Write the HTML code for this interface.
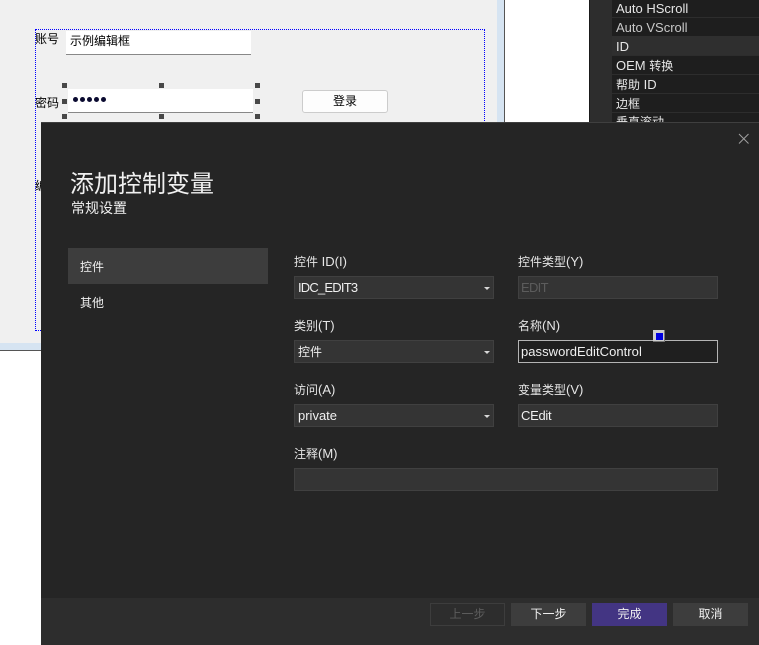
<!DOCTYPE html>
<html lang="zh">
<head>
<meta charset="utf-8">
<title>添加控制变量</title>
<style>
html,body{margin:0;padding:0;width:759px;height:645px;overflow:hidden;background:#fff}
body{position:relative;font-family:"Liberation Sans","Noto Sans CJK SC",sans-serif;font-size:13px}
.a{position:absolute;box-sizing:border-box}
.t{position:absolute;white-space:nowrap;line-height:18px;height:18px}
.row{position:absolute;left:612px;width:147px;background:#1e1e1e;color:#e6e6e6;line-height:19px;padding-left:4px;box-sizing:border-box;white-space:nowrap}
.h{position:absolute;width:5px;height:5px;background:#484848}
.f{position:absolute;height:23px;width:200px;background:#343434;border:1px solid #404040;box-sizing:border-box;color:#f0f0f0;line-height:21px;padding-left:3px;white-space:nowrap}
.f.w{padding-left:2px}
.arr{position:absolute;right:3px;top:10px;width:0;height:0;border-left:3px solid transparent;border-right:3px solid transparent;border-top:3px solid #d8d8d8}
.l{position:absolute;color:#e6e6e6;line-height:18px;white-space:nowrap}
.c{font-size:12px}
.b{position:absolute;top:603px;width:75px;height:23px;background:#3d3d3d;color:#f0f0f0;text-align:center;line-height:23px;box-sizing:border-box;font-size:12px}
</style>
</head>
<body>
<!-- background IDE -->
<div class="a" style="left:0;top:0;width:497px;height:343px;background:#f0f0f0"></div>
<div class="a" style="left:497px;top:0;width:7px;height:122px;background:#d6e4f2"></div>
<div class="a" style="left:0;top:343px;width:41px;height:7px;background:#d6e4f2"></div>
<div class="a" style="left:0;top:350px;width:41px;height:1px;background:#555"></div>
<div class="a" style="left:504px;top:0;width:1px;height:122px;background:#555"></div>
<div class="a" style="left:589px;top:0;width:1px;height:122px;background:#1a1a1a"></div>
<div class="a" style="left:590px;top:0;width:169px;height:122px;background:#2d2d2d"></div>

<div class="row" style="top:0;height:17px;line-height:17px">Auto HScroll</div>
<div class="row" style="top:18px;height:18px;color:#c8c8c8">Auto VScroll</div>
<div class="row" style="top:36px;height:19px;background:#2f2f2f;line-height:21px">ID</div>
<div class="row" style="top:56px;height:18px">OEM <span class="c">转换</span></div>
<div class="row" style="top:75px;height:18px"><span class="c">帮助</span> ID</div>
<div class="row" style="top:94px;height:18px"><span class="c">边框</span></div>
<div class="row" style="top:113px;height:9px;overflow:hidden;line-height:17px"><span class="c">垂直滚动</span></div>

<!-- dialog designer -->
<div class="a" style="left:35px;top:29px;width:450px;height:302px;border:1px dotted #0000ff"></div>
<div class="t" style="left:35px;top:30px;font-size:12px;color:#000">账号</div>
<div class="t" style="left:35px;top:94px;font-size:12px;color:#000">密码</div>
<div class="t" style="left:35px;top:177px;font-size:12px;color:#000">编</div>
<div class="a" style="left:66px;top:31px;width:185px;height:24px;background:#fff;border-bottom:1px solid #888;padding-left:4px;font-size:12px;line-height:21px;color:#000">示例编辑框</div>
<div class="a" style="left:68px;top:89px;width:185px;height:24px;background:#fff;border-bottom:1px solid #888"></div>
<div class="a" style="left:73px;top:97px;width:34px;height:9px;display:flex;gap:1.6px">
<i style="width:5.4px;height:5.4px;border-radius:50%;background:#0a0a30;display:block"></i><i style="width:5.4px;height:5.4px;border-radius:50%;background:#0a0a30;display:block"></i><i style="width:5.4px;height:5.4px;border-radius:50%;background:#0a0a30;display:block"></i><i style="width:5.4px;height:5.4px;border-radius:50%;background:#0a0a30;display:block"></i><i style="width:5.4px;height:5.4px;border-radius:50%;background:#0a0a30;display:block"></i>
</div>
<div class="a" style="left:302px;top:90px;width:86px;height:23px;background:#fdfdfd;border:1px solid #ccc;border-radius:3px;text-align:center;font-size:12px;line-height:21px;color:#000">登录</div>
<div class="h" style="left:62px;top:83px"></div><div class="h" style="left:159px;top:83px"></div><div class="h" style="left:255px;top:83px"></div>
<div class="h" style="left:62px;top:99px"></div><div class="h" style="left:255px;top:99px"></div>
<div class="h" style="left:62px;top:114px"></div><div class="h" style="left:159px;top:114px"></div><div class="h" style="left:255px;top:114px"></div>

<!-- modal -->
<div class="a" style="left:41px;top:122px;width:718px;height:523px;background:#252525;border-top:1px solid #3f3f3f"></div>
<div class="a" style="left:41px;top:598px;width:718px;height:47px;background:#2d2d2d"></div>
<svg class="a" style="left:738px;top:133px" width="12" height="12" viewBox="0 0 12 12"><path d="M1 1L10.500 10.500M10.500 1L1 10.500" stroke="#a0a0a0" stroke-width="1" fill="none"/></svg>

<div class="t" style="left:70px;top:169px;font-size:24px;line-height:32px;height:32px;color:#f0f0f0">添加控制变量</div>
<div class="t" style="left:71px;top:199px;font-size:14px;color:#f0f0f0">常规设置</div>

<div class="a" style="left:68px;top:248px;width:200px;height:36px;background:#3d3d3d"></div>
<div class="t" style="left:80px;top:258px;color:#f0f0f0;font-size:12px">控件</div>
<div class="t" style="left:80px;top:294px;color:#f0f0f0;font-size:12px">其他</div>

<div class="l" style="left:294px;top:253px"><span class="c">控件</span> ID(I)</div>
<div class="l" style="left:518px;top:253px"><span class="c">控件类型</span>(Y)</div>
<div class="l" style="left:294px;top:317px"><span class="c">类别</span>(T)</div>
<div class="l" style="left:518px;top:317px"><span class="c">名称</span>(N)</div>
<div class="l" style="left:294px;top:381px"><span class="c">访问</span>(A)</div>
<div class="l" style="left:518px;top:381px"><span class="c">变量类型</span>(V)</div>
<div class="l" style="left:294px;top:445px"><span class="c">注释</span>(M)</div>

<div class="f" style="left:294px;top:276px"><span style="letter-spacing:-.8px">IDC_EDIT3</span><span class="arr"></span></div>
<div class="f w" style="left:518px;top:276px;color:#5c5c5c;letter-spacing:-.7px">EDIT</div>
<div class="f" style="left:294px;top:340px"><span class="c">控件</span><span class="arr"></span></div>
<div class="f w" style="left:518px;top:340px;background:#1f1f1f;border-color:#b4b4b4;letter-spacing:.05px">passwordEditControl</div>
<div class="f" style="left:294px;top:404px">private<span class="arr"></span></div>
<div class="f w" style="left:518px;top:404px;letter-spacing:-.3px">CEdit</div>
<div class="f" style="left:294px;top:468px;width:424px"></div>

<div class="a" style="left:653px;top:330px;width:12px;height:12px;background:#d0d0d0;border-right:1px solid #777;border-bottom:1px solid #777"></div>
<div class="a" style="left:656px;top:333px;width:7px;height:7px;background:#0000e0"></div>

<div class="b" style="left:430px;background:none;border:1px solid #3d3d3d;color:#5c5c5c;line-height:21px">上一步</div>
<div class="b" style="left:511px">下一步</div>
<div class="b" style="left:592px;background:#433583">完成</div>
<div class="b" style="left:673px">取消</div>
</body>
</html>
